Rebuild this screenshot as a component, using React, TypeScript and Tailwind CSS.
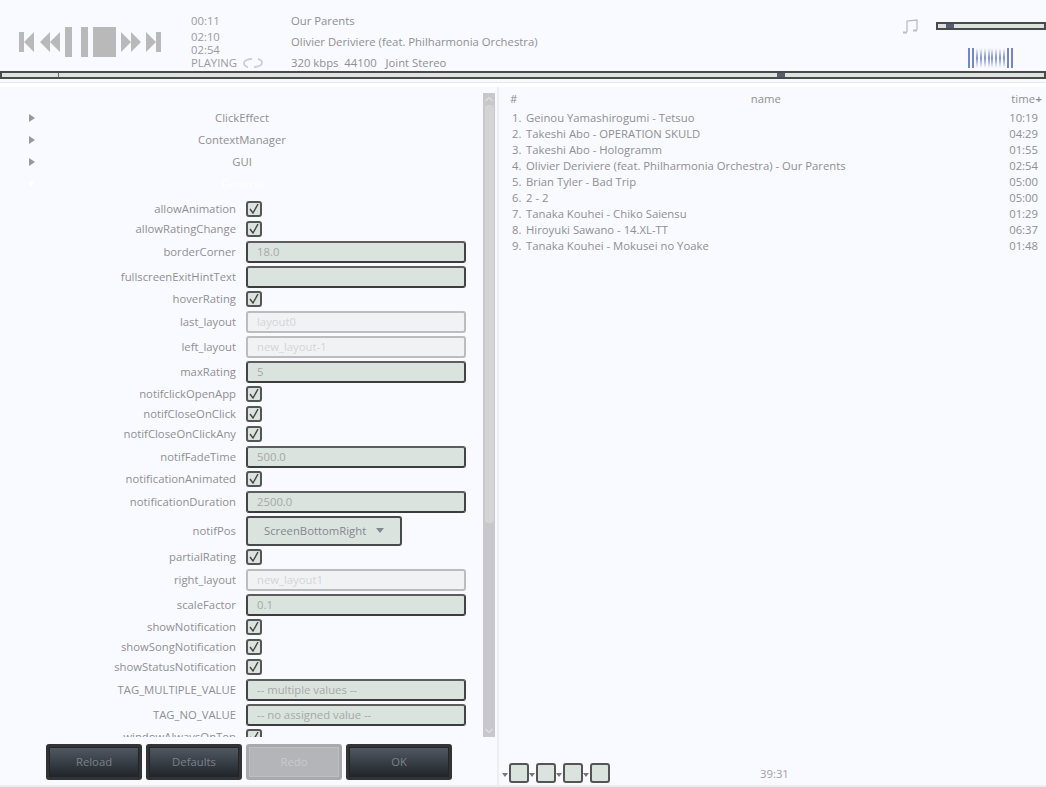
const font = "[font-family:'Open_Sans','Noto_Sans',sans-serif]"

type Row =
  | { k: "check"; label: string }
  | { k: "field"; label: string; value: string; off?: boolean }
  | { k: "select"; label: string; value: string }

const rows: Row[] = [
  { k: "check", label: "allowAnimation" },
  { k: "check", label: "allowRatingChange" },
  { k: "field", label: "borderCorner", value: "18.0" },
  { k: "field", label: "fullscreenExitHintText", value: "" },
  { k: "check", label: "hoverRating" },
  { k: "field", label: "last_layout", value: "layout0", off: true },
  { k: "field", label: "left_layout", value: "new_layout-1", off: true },
  { k: "field", label: "maxRating", value: "5" },
  { k: "check", label: "notifclickOpenApp" },
  { k: "check", label: "notifCloseOnClick" },
  { k: "check", label: "notifCloseOnClickAny" },
  { k: "field", label: "notifFadeTime", value: "500.0" },
  { k: "check", label: "notificationAnimated" },
  { k: "field", label: "notificationDuration", value: "2500.0" },
  { k: "select", label: "notifPos", value: "ScreenBottomRight" },
  { k: "check", label: "partialRating" },
  { k: "field", label: "right_layout", value: "new_layout1", off: true },
  { k: "field", label: "scaleFactor", value: "0.1" },
  { k: "check", label: "showNotification" },
  { k: "check", label: "showSongNotification" },
  { k: "check", label: "showStatusNotification" },
  { k: "field", label: "TAG_MULTIPLE_VALUE", value: "-- multiple values --" },
  { k: "field", label: "TAG_NO_VALUE", value: "-- no assigned value --" },
  { k: "check", label: "windowAlwaysOnTop" },
]

const songs = [
  ["1.", "Geinou Yamashirogumi - Tetsuo", "10:19"],
  ["2.", "Takeshi Abo - OPERATION SKULD", "04:29"],
  ["3.", "Takeshi Abo - Hologramm", "01:55"],
  ["4.", "Olivier Deriviere (feat. Philharmonia Orchestra) - Our Parents", "02:54"],
  ["5.", "Brian Tyler - Bad Trip", "05:00"],
  ["6.", "2 - 2", "05:00"],
  ["7.", "Tanaka Kouhei - Chiko Saiensu", "01:29"],
  ["8.", "Hiroyuki Sawano - 14.XL-TT", "06:37"],
  ["9.", "Tanaka Kouhei - Mokusei no Yoake", "01:48"],
]

// playback buttons, one svg since they sit edge to edge
function Controls() {
  return (
    <svg width="145" height="30" viewBox="0 0 145 30" className="shrink-0 fill-[#b9b9b9]">
      <path d="M0 5h5v20H0zM5 15 15 5v20zM21 15 31 5v20zM31 15 41 5v20z" />
      <path d="M46 0h7v30h-7zM62 0h7v30h-7zM74 0h23v30H74z" />
      <path d="M102 5l10 10-10 10zM112 5l10 10-10 10zM127 5l10 10-10 10zM137 5h5v20h-5z" />
    </svg>
  )
}

function Seek({ className, thumb, tick }: { className: string; thumb: string; tick?: string }) {
  return (
    <div className={`relative border-2 border-[#4a4a4a] bg-[#dbe3de] ${className}`}>
      {tick && <div className={`absolute top-0 bottom-0 w-[1px] bg-[#6a6a6a] ${tick}`} />}
      <div className={`absolute top-0 bottom-0 w-2 bg-[#575c75] ${thumb}`} />
    </div>
  )
}

function Check() {
  return (
    <div className="flex h-4 w-4 items-center justify-center rounded-[3px] border-2 border-[#555] bg-[#dbe3de]">
      <svg width="12" height="12" viewBox="0 0 12 12" fill="none" stroke="#444" strokeWidth="1.4">
        <path d="M2 6l3 4 5-9" />
      </svg>
    </div>
  )
}

function SettingRow({ row }: { row: Row }) {
  const h = row.k === "check" ? "h-5" : row.k === "select" ? "h-[33px]" : "h-[25px]"
  return (
    <div className={`flex items-center ${h}`}>
      <span className="w-[236px] shrink-0 truncate pl-2 text-right text-[#8f8f93]">{row.label}</span>
      <div className="ml-[10px]">
        {row.k === "check" && <Check />}
        {row.k === "field" && (
          <div
            className={`flex h-[22px] w-[220px] items-center rounded-[3px] border-2 pl-[9px] ${
              row.off
                ? "border-[#bcbcbc] bg-[#f0f2f4] text-[#d4d5d8]"
                : "border-[#444444] border-t-[#5d5d5d] border-b-[#3c3c3c] bg-[#dbe3de] text-[#a5a9a8]"
            }`}
          >
            {row.value}
          </div>
        )}
        {row.k === "select" && (
          <div className="flex h-[30px] w-[156px] items-center rounded-[3px] border-2 border-[#4a4a4a] bg-[#dbe3de] pl-4 text-[#85868f]">
            {row.value}
            <span className="ml-[10px] h-0 w-0 border-x-[4px] border-t-[5px] border-x-transparent border-t-[#85868f]" />
          </div>
        )}
      </div>
    </div>
  )
}

function TreeItem({ label, open }: { label: string; open?: boolean }) {
  return (
    <div className={`relative flex h-[22px] items-center justify-center pl-[1px] ${open ? "text-white" : "text-[#8f8f93]"}`}>
      <span
        className={`absolute h-0 w-0 ${
          open
            ? "left-[28px] border-x-[3px] border-t-[6px] border-x-transparent border-t-white"
            : "left-[29px] border-y-[4px] border-l-[6px] border-y-transparent border-l-[#97979c]"
        }`}
      />
      {label}
    </div>
  )
}

function DarkButton({ label, off, wide }: { label: string; off?: boolean; wide?: boolean }) {
  return (
    <div
      className={`flex h-9 items-center justify-center rounded-[3px] border-[3px] ${wide ? "w-[106px]" : "w-24"} ${
        off
          ? "border-[#a9a9ab] bg-[#b4b5b8] text-[#c8c9cc] shadow-[inset_0_0_0_1px_#bdbec1]"
          : "border-[#333333] bg-gradient-to-b from-[#525a64] to-[#20252b] text-[#7d8188] shadow-[inset_0_0_0_1px_#22262b]"
      }`}
    >
      {label}
    </div>
  )
}

export default function App() {
  return (
    <div className={`flex h-[787px] w-[1046px] flex-col overflow-hidden bg-[#f9faff] text-[11.3px] ${font}`}>
      {/* player header */}
      <div className="flex h-[71px] shrink-0">
        <div className="ml-[19px] mt-[27px]">
          <Controls />
        </div>
        <div className="ml-[27px] w-[100px] pt-[14px] leading-[13px] text-[#9a9a9e]">
          <div className="mb-[3px]">00:11</div>
          <div>02:10</div>
          <div>02:54</div>
          <div className="flex items-center gap-[6px]">
            PLAYING
            <svg width="20" height="12" viewBox="0 0 20 12" fill="none" stroke="#cfcfd1" strokeWidth="1.8">
              <path d="M5 10C2.5 9.5 1 7.5 1 6c0-2 3-4 8-4" />
              <path d="M15 2c2.5.5 4 2.5 4 4 0 2-3 4-8 4" />
            </svg>
          </div>
        </div>
        <div className="pt-[10px] leading-[21px] text-[#8f8f93]">
          <div>Our Parents</div>
          <div>Olivier Deriviere (feat. Philharmonia Orchestra)</div>
          <div>
            320 kbps&nbsp;&nbsp;44100&nbsp;&nbsp;<span className="ml-[3px]">Joint Stereo</span>
          </div>
        </div>
        <div className="ml-auto flex w-[145px] flex-col items-end">
          <div className="mt-[19px] flex w-full items-start pl-[1px]">
            <svg width="16" height="15" viewBox="0 0 16 15" fill="none" stroke="#bdbdbf" strokeWidth="1.3">
              <path d="M5 13V2l10-1v10" />
              <path d="M1 13.5h4M11 11.5h4" strokeWidth="2.2" />
            </svg>
            <Seek className="ml-[18px] mt-[3px] h-2 w-[110px]" thumb="left-[8px]" />
          </div>
          <div className="mr-[33px] mt-[14px] flex h-5 w-[45px] justify-between">
            {[0, 1, 2, 3, 4, 5, 6, 7, 8, 9, 10, 11].map((i) => (
              <span
                key={i}
                className={`w-[2px] ${
                  i < 2 || i > 9
                    ? "bg-[#7686c4]"
                    : "bg-gradient-to-b from-[#f9faff] via-[#8492cb] to-[#f9faff]"
                }`}
              />
            ))}
          </div>
        </div>
      </div>
      <Seek className="h-2 w-full shrink-0" thumb="left-[775px]" tick="left-[56px]" />
      <div className="mt-[3px] h-[1px] shrink-0 bg-[#e8e8ea]" />
      <div className="h-1 shrink-0 bg-white" />

      <div className="flex min-h-0 flex-1">
        {/* settings */}
        <div className="flex h-[700px] w-[497px] shrink-0 flex-col border-b-2 border-[#eeeef0] pt-[6px]">
          <div className="flex h-[644px]">
            <div className="h-full w-[483px] shrink-0 overflow-hidden pt-[14px] leading-4">
              <TreeItem label="ClickEffect" />
              <TreeItem label="ContextManager" />
              <TreeItem label="GUI" />
              <TreeItem label="General" open />
              <div className="h-1" />
              {rows.map((r) => (
                <SettingRow key={r.label} row={r} />
              ))}
            </div>
            <div className="relative h-full w-3 bg-[#c8c8cc]">
              <svg width="8" height="6" viewBox="0 0 8 6" fill="none" stroke="#e2e2e4" strokeWidth="1.2" className="absolute left-[2px] top-[3px]">
                <path d="M0.5 5 4 1.5 7.5 5" />
              </svg>
              <div className="absolute left-[2px] right-[1px] top-3 h-[418px] rounded-[3px] bg-[#d4d4d4]" />
              <svg width="8" height="6" viewBox="0 0 8 6" fill="none" stroke="#e2e2e4" strokeWidth="1.2" className="absolute bottom-[3px] left-[2px]">
                <path d="M0.5 1 4 4.5 7.5 1" />
              </svg>
            </div>
          </div>
          <div className="mt-[7px] flex gap-1 pl-[46px]">
            <DarkButton label="Reload" />
            <DarkButton label="Defaults" />
            <DarkButton label="Redo" off />
            <DarkButton label="OK" wide />
          </div>
        </div>

        {/* playlist */}
        <div className="flex h-[700px] flex-1 flex-col border-b-2 border-l-2 border-[#eeeef0] pt-[2px] text-[#8f8f93]">
          <div className="relative flex h-[21px] items-center justify-between pl-[11px] pr-[11px]">
            <span>#</span>
            <span className="ml-[3px]">name</span>
            <span>time</span>
            <span className="absolute right-[4px] top-[2px] font-bold leading-4 text-[#8f8f93]">+</span>
          </div>
          <div className="pl-[13px] pr-[8px]">
            {songs.map(([n, name, time]) => (
              <div key={n} className="flex h-4 items-center">
                <span className="w-[14px] shrink-0">{n}</span>
                <span className="flex-1">{name}</span>
                <span>{time}</span>
              </div>
            ))}
          </div>
          <div className="mt-auto flex h-[26px] items-start">
            <div className="ml-[3px] mt-1 flex">
              {[0, 1, 2, 3].map((i) => (
                <div key={i} className="flex items-end">
                  <span className="mb-[6px] mr-[1px] h-0 w-0 border-x-[3px] border-t-[4px] border-x-transparent border-t-[#777]" />
                  <div className="h-5 w-5 rounded-[3px] border-2 border-[#555] bg-[#dbe3de]" />
                </div>
              ))}
            </div>
            <span className="ml-[150px] mt-[7px] text-[#a0a0a4]">39:31</span>
          </div>
        </div>
      </div>
    </div>
  )
}
